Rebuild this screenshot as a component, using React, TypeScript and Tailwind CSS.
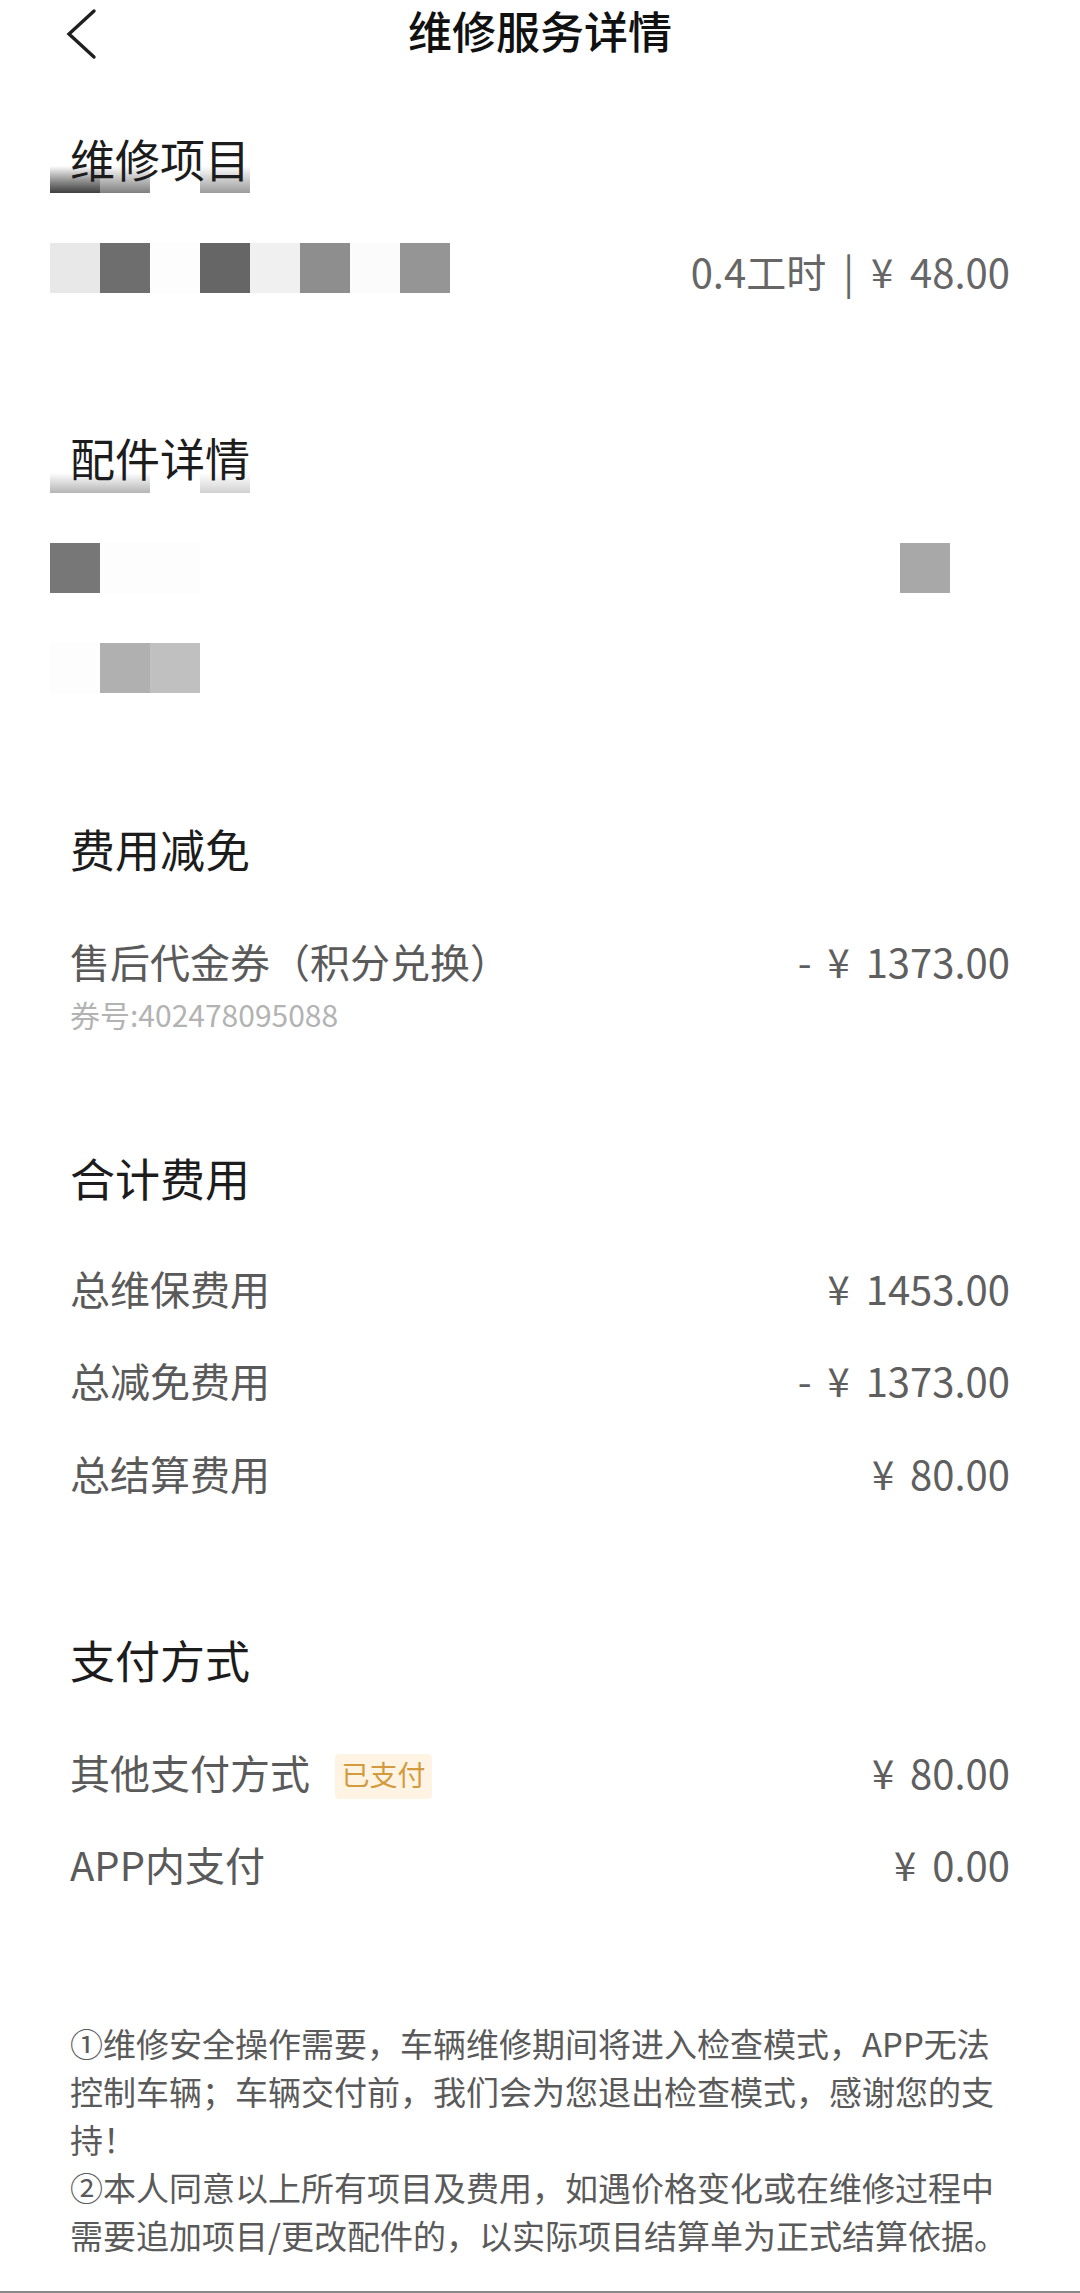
const ROW1 = ["#e8e8e8", "#6e6e6e", "#fdfdfd", "#666666", "#f0f0f0", "#8e8e8e", "#fbfbfb", "#959595"];
const ROW2 = ["#777777", "#fdfdfd", "#fdfdfd"];
const ROW3 = ["#fdfdfd", "#b0b0b0", "#c0c0c0"];

function Blocks({ colors }: { colors: string[] }) {
  return (
    <div className="flex">
      {colors.map((c, i) => (
        <div key={i} className="h-[50px] w-[50px]" style={{ backgroundColor: c }} />
      ))}
    </div>
  );
}

function SectionTitle({ title, className = "", smudge }: { title: string; className?: string; smudge?: React.ReactNode }) {
  return (
    <div className={`relative flex h-[60px] items-center px-[70px] ${className}`}>
      {smudge}
      <span className="relative pb-[8px] text-[45px] leading-none text-[#1c1c1c]">{title}</span>
    </div>
  );
}

function Row({ label, value, className = "", badge }: { label: string; value: string; className?: string; badge?: string }) {
  return (
    <div className={`flex h-[50px] items-center justify-between px-[70px] ${className}`}>
      <div className="flex items-center">
        <span className="pb-[8px] text-[40px] leading-none text-[#5a5a5a]">{label}</span>
        {badge && (
          <span className="ml-[25px] flex h-[45px] w-[97px] items-center justify-center rounded-[4px] bg-[#fff4e4] pb-[4px] text-[28px] leading-none text-[#d39a3e]">
            {badge}
          </span>
        )}
      </div>
      <span className="pb-[8px] text-[40px] leading-none text-[#5f5f5f] [word-spacing:7px]">{value}</span>
    </div>
  );
}

export default function App() {
  return (
    <div className="w-[1080px] bg-white font-['Noto_Sans_CJK_SC','Noto_Sans',sans-serif]">
      <header className="relative flex h-[66px] items-center justify-center">
        <svg className="absolute left-[62px] top-[8px]" width="40" height="52" viewBox="0 0 40 52">
          <path d="M32 3 L7 26 L32 49" fill="none" stroke="#1f1f1f" strokeWidth="3.4" strokeLinecap="round" strokeLinejoin="miter" />
        </svg>
        <h1 className="pb-[6px] text-[44px] font-medium leading-none text-[#111]">维修服务详情</h1>
      </header>

      <SectionTitle
        title="维修项目"
        className="mt-[66px]"
        smudge={
          <div className="absolute left-[50px] top-[34px] flex">
            <div className="h-[27px] w-[50px] bg-gradient-to-b from-white to-[#3f3f3f]" />
            <div className="h-[27px] w-[50px] bg-gradient-to-b from-white to-[#808080]" />
            <div className="h-[27px] w-[50px]" />
            <div className="h-[27px] w-[50px] bg-gradient-to-b from-white to-[#9c9c9c]" />
          </div>
        }
      />

      <div className="mt-[51px] flex h-[50px] items-center justify-between pl-[50px] pr-[70px]">
        <Blocks colors={ROW1} />
        <span className="mt-[6px] text-[40px] leading-none text-[#666] [word-spacing:8px]">0.4工时 | ¥ 48.00</span>
      </div>

      <SectionTitle
        title="配件详情"
        className="mt-[138px]"
        smudge={
          <div className="absolute left-[50px] top-[42px] flex">
            <div className="h-[20px] w-[100px] bg-gradient-to-b from-white to-[#b5b5b5]" />
            <div className="h-[20px] w-[50px]" />
            <div className="h-[20px] w-[50px] bg-gradient-to-b from-white to-[#d2d2d2]" />
          </div>
        }
      />

      <div className="mt-[52px] flex h-[50px] items-center justify-between pl-[50px] pr-[130px]">
        <Blocks colors={ROW2} />
        <div className="h-[50px] w-[50px] bg-[#a8a8a8]" />
      </div>
      <div className="mt-[50px] flex h-[50px] pl-[50px]">
        <Blocks colors={ROW3} />
      </div>

      <SectionTitle title="费用减免" className="mt-[129px]" />
      <Row label="售后代金券（积分兑换）" value="- ¥ 1373.00" className="mt-[58px]" />
      <div className="mt-[10px] flex h-[34px] items-center px-[70px]">
        <span className="pb-[6px] text-[30px] leading-none text-[#b3b3b3]">券号:402478095088</span>
      </div>

      <SectionTitle title="合计费用" className="mt-[117px]" />
      <Row label="总维保费用" value="¥ 1453.00" className="mt-[56px]" />
      <Row label="总减免费用" value="- ¥ 1373.00" className="mt-[42px]" />
      <Row label="总结算费用" value="¥ 80.00" className="mt-[43px]" />

      <SectionTitle title="支付方式" className="mt-[131px]" />
      <Row label="其他支付方式" value="¥ 80.00" badge="已支付" className="mt-[58px]" />
      <Row label="APP内支付" value="¥ 0.00" className="mt-[42px]" />

      <div className="mt-[126px] pl-[70px] pr-[60px] text-[33px] leading-[48px] text-[#5a5a5a]">
        <p>①维修安全操作需要，车辆维修期间将进入检查模式，APP无法控制车辆；车辆交付前，我们会为您退出检查模式，感谢您的支持！</p>
        <p>②本人同意以上所有项目及费用，如遇价格变化或在维修过程中需要追加项目/更改配件的，以实际项目结算单为正式结算依据。</p>
      </div>

      <div className="mt-[32px] h-[2px] bg-[#8a8a8a]" />
    </div>
  );
}
